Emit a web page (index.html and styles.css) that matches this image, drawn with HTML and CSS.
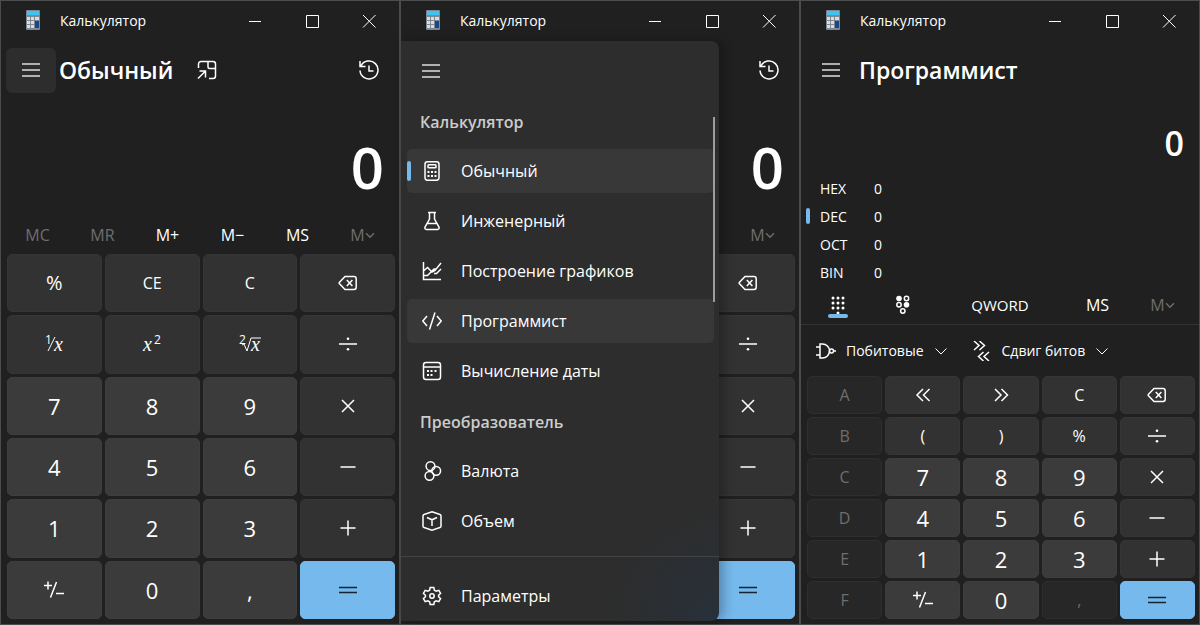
FILE: index.html
```html
<!DOCTYPE html>
<html lang="ru">
<head>
  <meta charset="UTF-8" />
  <meta name="viewport" content="width=device-width, initial-scale=1.0"/>
  <title>Калькулятор</title>
  <link rel="stylesheet" href="styles.css">
</head>
<body>
  <!-- Icon sprite -->
  <svg class="sprite" aria-hidden="true">
    <symbol id="app" viewBox="0 0 14 20">
      <rect width="14" height="20" rx="1" fill="#7f8790"/>
      <rect x="1" y="1" width="12" height="4" fill="#3cc4f2"/>
      <path d="M1 7h3v3H1zM5 7h3v3H5zM9 7h4v3H9zM1 11h3v3H1zM5 11h3v3H5zM1 15h3v3H1zM5 15h3v3H5z" fill="#d9dde2"/>
      <rect x="9" y="11" width="4" height="7" fill="#124a8c"/>
    </symbol>
    <symbol id="min" viewBox="0 0 14 14"><path d="M1 7.500h12"/></symbol>
    <symbol id="max" viewBox="0 0 14 14"><path d="M1.500 1.500h12v12h-12z"/></symbol>
    <symbol id="close" viewBox="0 0 14 14"><path d="M1 1l12.500 12.500M13.500 1L1 13.500"/></symbol>
    <symbol id="menu" viewBox="0 0 20 20"><path d="M1 4h18M1 10h18M1 16h18"/></symbol>
    <symbol id="pin" viewBox="0 0 20 20"><path d="M1.500 8V4a2.500 2.500 0 0 1 2.500-2.500h12A2.500 2.500 0 0 1 18.500 4v12a2.500 2.500 0 0 1-2.500 2.500h-4M11 1.500V7a1.500 1.500 0 0 0 1.500 1.500h6M1 18.500l7.500-7.500M2.500 11H8.500v6.500"/></symbol>
    <symbol id="history" viewBox="0 0 20 20"><path d="M1 1v5.500h5.500M1.800 6.200A9 9 0 1 1 1 10.500M10 5.500V11h4.500"/></symbol>
    <symbol id="chevron" viewBox="0 0 14 14"><path d="M1.500 4.500L7 10l5.500-5.500"/></symbol>
    <symbol id="back" viewBox="0 0 20 20"><path d="M7 3.500h9A2.200 2.200 0 0 1 18.200 5.700v8.600A2.200 2.200 0 0 1 16 16.500H7L1.500 10.800a1.200 1.200 0 0 1 0-1.600zM8.800 7l5.600 6M14.400 7l-5.600 6"/></symbol>
    <symbol id="divide" viewBox="0 0 20 20"><path d="M1 10h18"/><circle class="fill" cx="10" cy="4.800" r="1.300"/><circle class="fill" cx="10" cy="15.200" r="1.300"/></symbol>
    <symbol id="times" viewBox="0 0 20 20"><path d="M4 4l12 12M16 4L4 16"/></symbol>
    <symbol id="minus" viewBox="0 0 20 20"><path d="M2.500 10h15"/></symbol>
    <symbol id="plus" viewBox="0 0 20 20"><path d="M2.500 10h15M10 2.500v15"/></symbol>
    <symbol id="equals" viewBox="0 0 20 20"><path d="M1 7.500h18M1 12.500h18"/></symbol>
    <symbol id="sign" viewBox="0 0 20 20"><path d="M0 5.500h8M4 1.500v8M12.500 2L6.500 17.500M12 13.500h8"/></symbol>
    <symbol id="left" viewBox="0 0 20 20"><path d="M10 4l-6 6 6 6M16.500 4l-6 6 6 6"/></symbol>
    <symbol id="right" viewBox="0 0 20 20"><path d="M4 4l6 6-6 6M10.500 4l6 6-6 6"/></symbol>
    <symbol id="calc" viewBox="0 0 20 20">
      <rect x="3" y=".8" width="14" height="18.500" rx="2.500"/><rect x="6" y="3.800" width="8" height="3" rx=".8"/>
      <path class="fill" d="M5.500 10h2v2h-2zM9 10h2v2H9zM12.500 10h2v2h-2zM5.500 14h2v2h-2zM9 14h2v2H9zM12.500 14h2v2h-2z"/>
    </symbol>
    <symbol id="flask" viewBox="0 0 20 20"><path d="M6 1.500h8M7.500 1.500V8L3 16.200a1.500 1.500 0 0 0 1.300 2.200h11.400a1.500 1.500 0 0 0 1.300-2.200L12.500 8V1.500M5.500 12.500h9"/></symbol>
    <symbol id="graph" viewBox="0 0 20 20"><path d="M1.500 1v17.500H19M2 9.500l3.500-3L10 11l3-1.500L19 2M2 14.500h3.500l6.500-6.500h2M12 12.500h2.500L19 8"/></symbol>
    <symbol id="code" viewBox="0 0 20 20"><path d="M5 5L.8 10 5 15M15 5l4.200 5-4.200 5M13 1.500L7.500 18.500"/></symbol>
    <symbol id="date" viewBox="0 0 20 20">
      <rect x="1.500" y="1.500" width="17" height="17" rx="2.500"/><path d="M1.500 6h17"/>
      <path class="fill" d="M8.500 9h2v2h-2zM12.500 9h2v2h-2zM5 9h2v2H5zM5 13h2v2H5zM8.500 13h2v2h-2z"/>
    </symbol>
    <symbol id="currency" viewBox="0 0 20 20"><circle cx="8.500" cy="5.200" r="4.400"/><circle cx="14.200" cy="9.800" r="4.400"/><circle cx="7.500" cy="14.800" r="4.400"/></symbol>
    <symbol id="cube" viewBox="0 0 20 20"><path d="M10 .8l8 2.700a1.500 1.500 0 0 1 1 1.300v10.400a1.500 1.500 0 0 1-1 1.300l-8 2.700-8-2.700a1.500 1.500 0 0 1-1-1.300V4.800a1.500 1.500 0 0 1 1-1.300zM5 6.500L10 8.800l5-2.300M10 8.800V15"/></symbol>
    <symbol id="gear" viewBox="0 0 20 20"><path d="M8.200 1.500h3.600l.6 2.700 1.800 1 2.600-.9 1.800 3.100-2 1.900v1.400l2 1.900-1.800 3.100-2.600-.9-1.800 1-.6 2.700H8.200l-.6-2.700-1.800-1-2.600.9-1.800-3.100 2-1.900V9.300l-2-1.900 1.800-3.100 2.600.9 1.800-1z"/><circle cx="10" cy="10" r="2.200"/></symbol>
    <symbol id="keys" viewBox="0 0 20 20">
      <path class="dots" d="M5 3h0M10 3h0M15 3h0M5 8h0M10 8h0M15 8h0M5 13h0M10 13h0M15 13h0M10 18h0"/>
    </symbol>
    <symbol id="bits" viewBox="0 0 20 20">
      <circle class="fill" cx="6" cy="3.500" r="2.800"/><circle cx="13.500" cy="3.500" r="2.200"/>
      <circle cx="6" cy="9.700" r="2.200"/><circle class="fill" cx="13.500" cy="9.700" r="2.800"/><circle cx="9.800" cy="16" r="2.200"/>
    </symbol>
    <symbol id="gate" viewBox="0 0 20 20"><path d="M0 6h4M0 14h4M4 3h2.500a7 7 0 0 1 0 14H4zM17.500 10H20"/><circle cx="15.500" cy="10" r="2"/></symbol>
    <symbol id="shift" viewBox="0 0 20 20"><path d="M2 0l5 4.500L2 9M7.500 0l5 4.500L7.500 9M11.500 11l-5 4.500 5 4.500M17 11l-5 4.500 5 4.500"/></symbol>
  </svg>

  <main class="desktop">
    <!-- Standard calculator -->
    <section class="window">
      <div class="titlebar">
        <svg class="app-icon"><use href="#app"/></svg>
        <span class="caption">Калькулятор</span>
        <button aria-label="Свернуть"><svg><use href="#min"/></svg></button>
        <button aria-label="Развернуть"><svg><use href="#max"/></svg></button>
        <button aria-label="Закрыть"><svg><use href="#close"/></svg></button>
      </div>
      <header class="header">
        <button class="menu-btn active" aria-label="Меню"><svg class="icon"><use href="#menu"/></svg></button>
        <h1>Обычный</h1>
        <button class="pin-btn" aria-label="Поверх окон"><svg class="icon"><use href="#pin"/></svg></button>
        <button class="history-btn" aria-label="Журнал"><svg class="icon"><use href="#history"/></svg></button>
      </header>
      <output class="display">0</output>
      <div class="memory">
        <button disabled>MC</button>
        <button disabled>MR</button>
        <button>M+</button>
        <button>M−</button>
        <button>MS</button>
        <button disabled>M<svg><use href="#chevron"/></svg></button>
      </div>
      <div class="keypad">
        <button>%</button>
        <button class="small">CE</button>
        <button class="small">C</button>
        <button aria-label="Удалить"><svg class="icon"><use href="#back"/></svg></button>
        <button>
          <svg class="formula" viewBox="0 0 24 24"><text class="index" x="3" y="12">1</text><path d="M13 5L6 19"/><text class="var" x="12" y="19">x</text></svg>
        </button>
        <button>
          <svg class="formula" viewBox="0 0 24 24"><text class="var" x="3" y="19">x</text><text class="index" x="14" y="12">2</text></svg>
        </button>
        <button>
          <svg class="formula" viewBox="0 0 24 24"><text class="index" x="1" y="12">2</text><path d="M4 13l2-1 3 7 4-13h10"/><text class="var" x="13" y="19">x</text></svg>
        </button>
        <button aria-label="Разделить"><svg class="icon"><use href="#divide"/></svg></button>
        <button class="digit">7</button>
        <button class="digit">8</button>
        <button class="digit">9</button>
        <button aria-label="Умножить"><svg class="icon"><use href="#times"/></svg></button>
        <button class="digit">4</button>
        <button class="digit">5</button>
        <button class="digit">6</button>
        <button aria-label="Вычесть"><svg class="icon"><use href="#minus"/></svg></button>
        <button class="digit">1</button>
        <button class="digit">2</button>
        <button class="digit">3</button>
        <button aria-label="Прибавить"><svg class="icon"><use href="#plus"/></svg></button>
        <button class="digit" aria-label="Плюс-минус"><svg class="icon"><use href="#sign"/></svg></button>
        <button class="digit">0</button>
        <button class="digit">,</button>
        <button class="equals" aria-label="Равно"><svg class="icon"><use href="#equals"/></svg></button>
      </div>
    </section>

    <!-- Standard calculator with the navigation open -->
    <section class="window">
      <div class="titlebar">
        <svg class="app-icon"><use href="#app"/></svg>
        <span class="caption">Калькулятор</span>
        <button aria-label="Свернуть"><svg><use href="#min"/></svg></button>
        <button aria-label="Развернуть"><svg><use href="#max"/></svg></button>
        <button aria-label="Закрыть"><svg><use href="#close"/></svg></button>
      </div>
      <header class="header">
        <button class="history-btn" aria-label="Журнал"><svg class="icon"><use href="#history"/></svg></button>
      </header>
      <output class="display">0</output>
      <div class="memory last-only">
        <button disabled>M<svg><use href="#chevron"/></svg></button>
      </div>
      <div class="keypad last-only">
        <button aria-label="Удалить"><svg class="icon"><use href="#back"/></svg></button>
        <button aria-label="Разделить"><svg class="icon"><use href="#divide"/></svg></button>
        <button aria-label="Умножить"><svg class="icon"><use href="#times"/></svg></button>
        <button aria-label="Вычесть"><svg class="icon"><use href="#minus"/></svg></button>
        <button aria-label="Прибавить"><svg class="icon"><use href="#plus"/></svg></button>
        <button class="equals" aria-label="Равно"><svg class="icon"><use href="#equals"/></svg></button>
      </div>
      <nav class="pane">
        <button class="menu-btn" aria-label="Меню"><svg class="icon"><use href="#menu"/></svg></button>
        <div class="pane-list">
          <h2>Калькулятор</h2>
          <a href="#standard" class="selected current"><svg class="icon"><use href="#calc"/></svg>Обычный</a>
          <a href="#scientific"><svg class="icon"><use href="#flask"/></svg>Инженерный</a>
          <a href="#graphing"><svg class="icon"><use href="#graph"/></svg>Построение графиков</a>
          <a href="#programmer" class="selected"><svg class="icon"><use href="#code"/></svg>Программист</a>
          <a href="#date-calc"><svg class="icon"><use href="#date"/></svg>Вычисление даты</a>
          <h2>Преобразователь</h2>
          <a href="#currency-conv"><svg class="icon"><use href="#currency"/></svg>Валюта</a>
          <a href="#volume"><svg class="icon"><use href="#cube"/></svg>Объем</a>
        </div>
        <div class="pane-footer">
          <a href="#settings"><svg class="icon"><use href="#gear"/></svg>Параметры</a>
        </div>
        <span class="scroll-thumb"></span>
      </nav>
    </section>

    <!-- Programmer calculator -->
    <section class="window">
      <div class="titlebar">
        <svg class="app-icon"><use href="#app"/></svg>
        <span class="caption">Калькулятор</span>
        <button aria-label="Свернуть"><svg><use href="#min"/></svg></button>
        <button aria-label="Развернуть"><svg><use href="#max"/></svg></button>
        <button aria-label="Закрыть"><svg><use href="#close"/></svg></button>
      </div>
      <header class="header">
        <button class="menu-btn" aria-label="Меню"><svg class="icon"><use href="#menu"/></svg></button>
        <h1>Программист</h1>
      </header>
      <output class="display compact">0</output>
      <div class="bases">
        <button><span>HEX</span><span>0</span></button>
        <button class="current"><span>DEC</span><span>0</span></button>
        <button><span>OCT</span><span>0</span></button>
        <button><span>BIN</span><span>0</span></button>
      </div>
      <div class="memory modes">
        <button class="current" aria-label="Полная клавиатура"><svg class="icon"><use href="#keys"/></svg></button>
        <button aria-label="Переключение битов"><svg class="icon"><use href="#bits"/></svg></button>
        <button class="word">QWORD</button>
        <button>MS</button>
        <button disabled>M<svg><use href="#chevron"/></svg></button>
      </div>
      <div class="tools">
        <button><svg class="icon"><use href="#gate"/></svg>Побитовые<svg class="arrow"><use href="#chevron"/></svg></button>
        <button><svg class="icon"><use href="#shift"/></svg>Сдвиг битов<svg class="arrow"><use href="#chevron"/></svg></button>
      </div>
      <div class="keypad five">
        <button class="small" disabled>A</button>
        <button aria-label="Сдвиг влево"><svg class="icon"><use href="#left"/></svg></button>
        <button aria-label="Сдвиг вправо"><svg class="icon"><use href="#right"/></svg></button>
        <button class="small">C</button>
        <button aria-label="Удалить"><svg class="icon"><use href="#back"/></svg></button>
        <button class="small" disabled>B</button>
        <button class="small">(</button>
        <button class="small">)</button>
        <button class="small">%</button>
        <button aria-label="Разделить"><svg class="icon"><use href="#divide"/></svg></button>
        <button class="small" disabled>C</button>
        <button class="digit">7</button>
        <button class="digit">8</button>
        <button class="digit">9</button>
        <button aria-label="Умножить"><svg class="icon"><use href="#times"/></svg></button>
        <button class="small" disabled>D</button>
        <button class="digit">4</button>
        <button class="digit">5</button>
        <button class="digit">6</button>
        <button aria-label="Вычесть"><svg class="icon"><use href="#minus"/></svg></button>
        <button class="small" disabled>E</button>
        <button class="digit">1</button>
        <button class="digit">2</button>
        <button class="digit">3</button>
        <button aria-label="Прибавить"><svg class="icon"><use href="#plus"/></svg></button>
        <button class="small" disabled>F</button>
        <button class="digit" aria-label="Плюс-минус"><svg class="icon"><use href="#sign"/></svg></button>
        <button class="digit">0</button>
        <button class="small" disabled>,</button>
        <button class="equals" aria-label="Равно"><svg class="icon"><use href="#equals"/></svg></button>
      </div>
    </section>
  </main>
</body>
</html>
```

FILE: styles.css
```css
/* Reset */
* { margin: 0; padding: 0; box-sizing: border-box; }
body {
  font-family: "Open Sans", "Noto Sans", sans-serif;
  font-size: 16px;
  color: #fff;
  background: #202020;
}
button {
  display: flex;
  align-items: center;
  justify-content: center;
  border: 0;
  background: none;
  color: inherit;
  font: inherit;
}
a { color: inherit; text-decoration: none; }

/* Icons */
svg { fill: none; stroke: currentColor; stroke-width: 1.5; flex: none; }
.sprite { position: absolute; width: 0; height: 0; }
.icon { width: 20px; height: 20px; }
.fill { fill: currentColor; stroke: none; }
.dots { stroke-width: 3; stroke-linecap: round; }

/* Windows */
.desktop {
  display: grid;
  grid-template-columns: repeat(3, 1fr);
  min-height: 100vh;
}
.window {
  position: relative;
  display: flex;
  flex-direction: column;
  background: #202020;
  border: 1px solid #4c4c4c;
}

/* Title bar */
.titlebar {
  display: flex;
  align-items: stretch;
  height: 40px;
  padding: 0 2px 0 25px;
}
.app-icon { width: 14px; height: 20px; margin: 9px 20px 0 0; stroke: none; }
.caption { flex: 1; font-size: 14px; line-height: 40px; }
.titlebar button { width: 57px; }
.titlebar button svg { width: 14px; height: 14px; stroke-width: 1; }

/* Header */
.header {
  display: flex;
  align-items: center;
  height: 58px;
  padding: 0 2px 0 5px;
}
.menu-btn {
  width: 50px;
  height: 45px;
  margin-right: 3px;
  border-radius: 6px;
  color: #ddd;
}
.menu-btn.active { background: #2d2d2d; }
h1 { font-size: 23px; font-weight: 600; line-height: 32px; }
.pin-btn { width: 68px; height: 44px; }
.history-btn { width: 56px; height: 44px; margin-left: auto; }

/* Display */
.display {
  padding: 28px 15px 8px;
  font-size: 58px;
  font-weight: 600;
  line-height: 80px;
  text-align: right;
}
.display.compact {
  padding: 22px 15px 9px;
  font-size: 34px;
  line-height: 44px;
}

/* Memory row */
.memory {
  display: grid;
  grid-template-columns: repeat(6, 1fr);
  height: 39px;
  padding: 0 4px;
}
.memory button:disabled { color: #6e6e6e; }
.memory button svg:not(.icon) { width: 10px; height: 14px; stroke-width: 2; }
.memory.last-only button { grid-column: 6; }

/* Keypad */
.keypad {
  flex: 1;
  display: grid;
  grid-template-columns: repeat(4, 1fr);
  grid-auto-rows: 1fr;
  gap: 3px;
  padding: 0 4px 5px 6px;
}
.keypad.five { grid-template-columns: repeat(5, 1fr); }
.keypad.last-only button { grid-column: 4; }
.keypad button {
  background: #323232;
  border: 1px solid #353535;
  border-radius: 5px;
  font-size: 20px;
  line-height: 28px;
}
.keypad .small { font-size: 16px; }
.keypad .digit {
  background: #3b3b3b;
  border-color: #3e3e3e;
  font-size: 22px;
}
.keypad button:disabled {
  background: #272727;
  border-color: #2e2e2e;
  color: #6e6e6e;
}
.keypad .equals {
  background: #76b9ed;
  border-color: #76b9ed;
  color: #16242f;
}
.formula { width: 24px; height: 24px; stroke-width: 1; overflow: visible; }
.formula text { fill: currentColor; stroke: none; }
.index { font-size: 12px; }
.var { font: italic 20px "Liberation Serif", serif; }

/* Navigation pane */
.pane {
  position: absolute;
  top: 40px;
  bottom: 3px;
  left: 0;
  width: 318px;
  display: flex;
  flex-direction: column;
  padding-top: 7px;
  background: radial-gradient(circle at 100% 100%, #27303a, #2d2d2d 110px);
  border-radius: 0 8px 8px 0;
  box-shadow: 4px 0 12px rgba(0,0,0,0.3);
}
.pane .menu-btn { margin-left: 5px; }
.pane-list {
  flex: 1;
  display: flex;
  flex-direction: column;
  gap: 6px;
  padding: 6px 5px 0 6px;
}
.pane h2 {
  padding: 2px 0 0 13px;
  font-size: 16px;
  font-weight: 600;
  line-height: 42px;
  color: #ccc;
}
.pane a {
  position: relative;
  display: flex;
  align-items: center;
  gap: 19px;
  height: 44px;
  padding-left: 15px;
  border-radius: 5px;
  font-size: 16px;
}
.pane a.selected { background: #383838; }
.pane a.current::before {
  content: "";
  position: absolute;
  left: 0;
  width: 4px;
  height: 20px;
  border-radius: 2px;
  background: #76b9ed;
}
.pane-footer {
  padding: 17px 6px 3px;
  border-top: 1px solid #434343;
}
.scroll-thumb {
  position: absolute;
  top: 76px;
  right: 4px;
  width: 2px;
  height: 185px;
  background: #9c9c9c;
}

/* Programmer mode */
.bases button {
  position: relative;
  width: 100%;
  height: 28px;
  justify-content: flex-start;
  padding-left: 19px;
  font-size: 14px;
}
.bases span:first-child { width: 54px; text-align: left; }
.bases .current::before {
  content: "";
  position: absolute;
  left: 5px;
  width: 4px;
  height: 16px;
  border-radius: 2px;
  background: #76b9ed;
}
.modes { border-bottom: 1px solid #333; }
.modes button { position: relative; }
.modes .current::after {
  content: "";
  position: absolute;
  bottom: 6px;
  width: 20px;
  height: 4px;
  border-radius: 2px;
  background: #76b9ed;
}
.modes .word { grid-column: span 2; font-size: 15px; }
.tools {
  display: flex;
  gap: 24px;
  height: 51px;
  padding-left: 15px;
}
.tools button { gap: 10px; font-size: 14px; }
.tools .arrow { width: 14px; height: 14px; stroke-width: 1; }
```
